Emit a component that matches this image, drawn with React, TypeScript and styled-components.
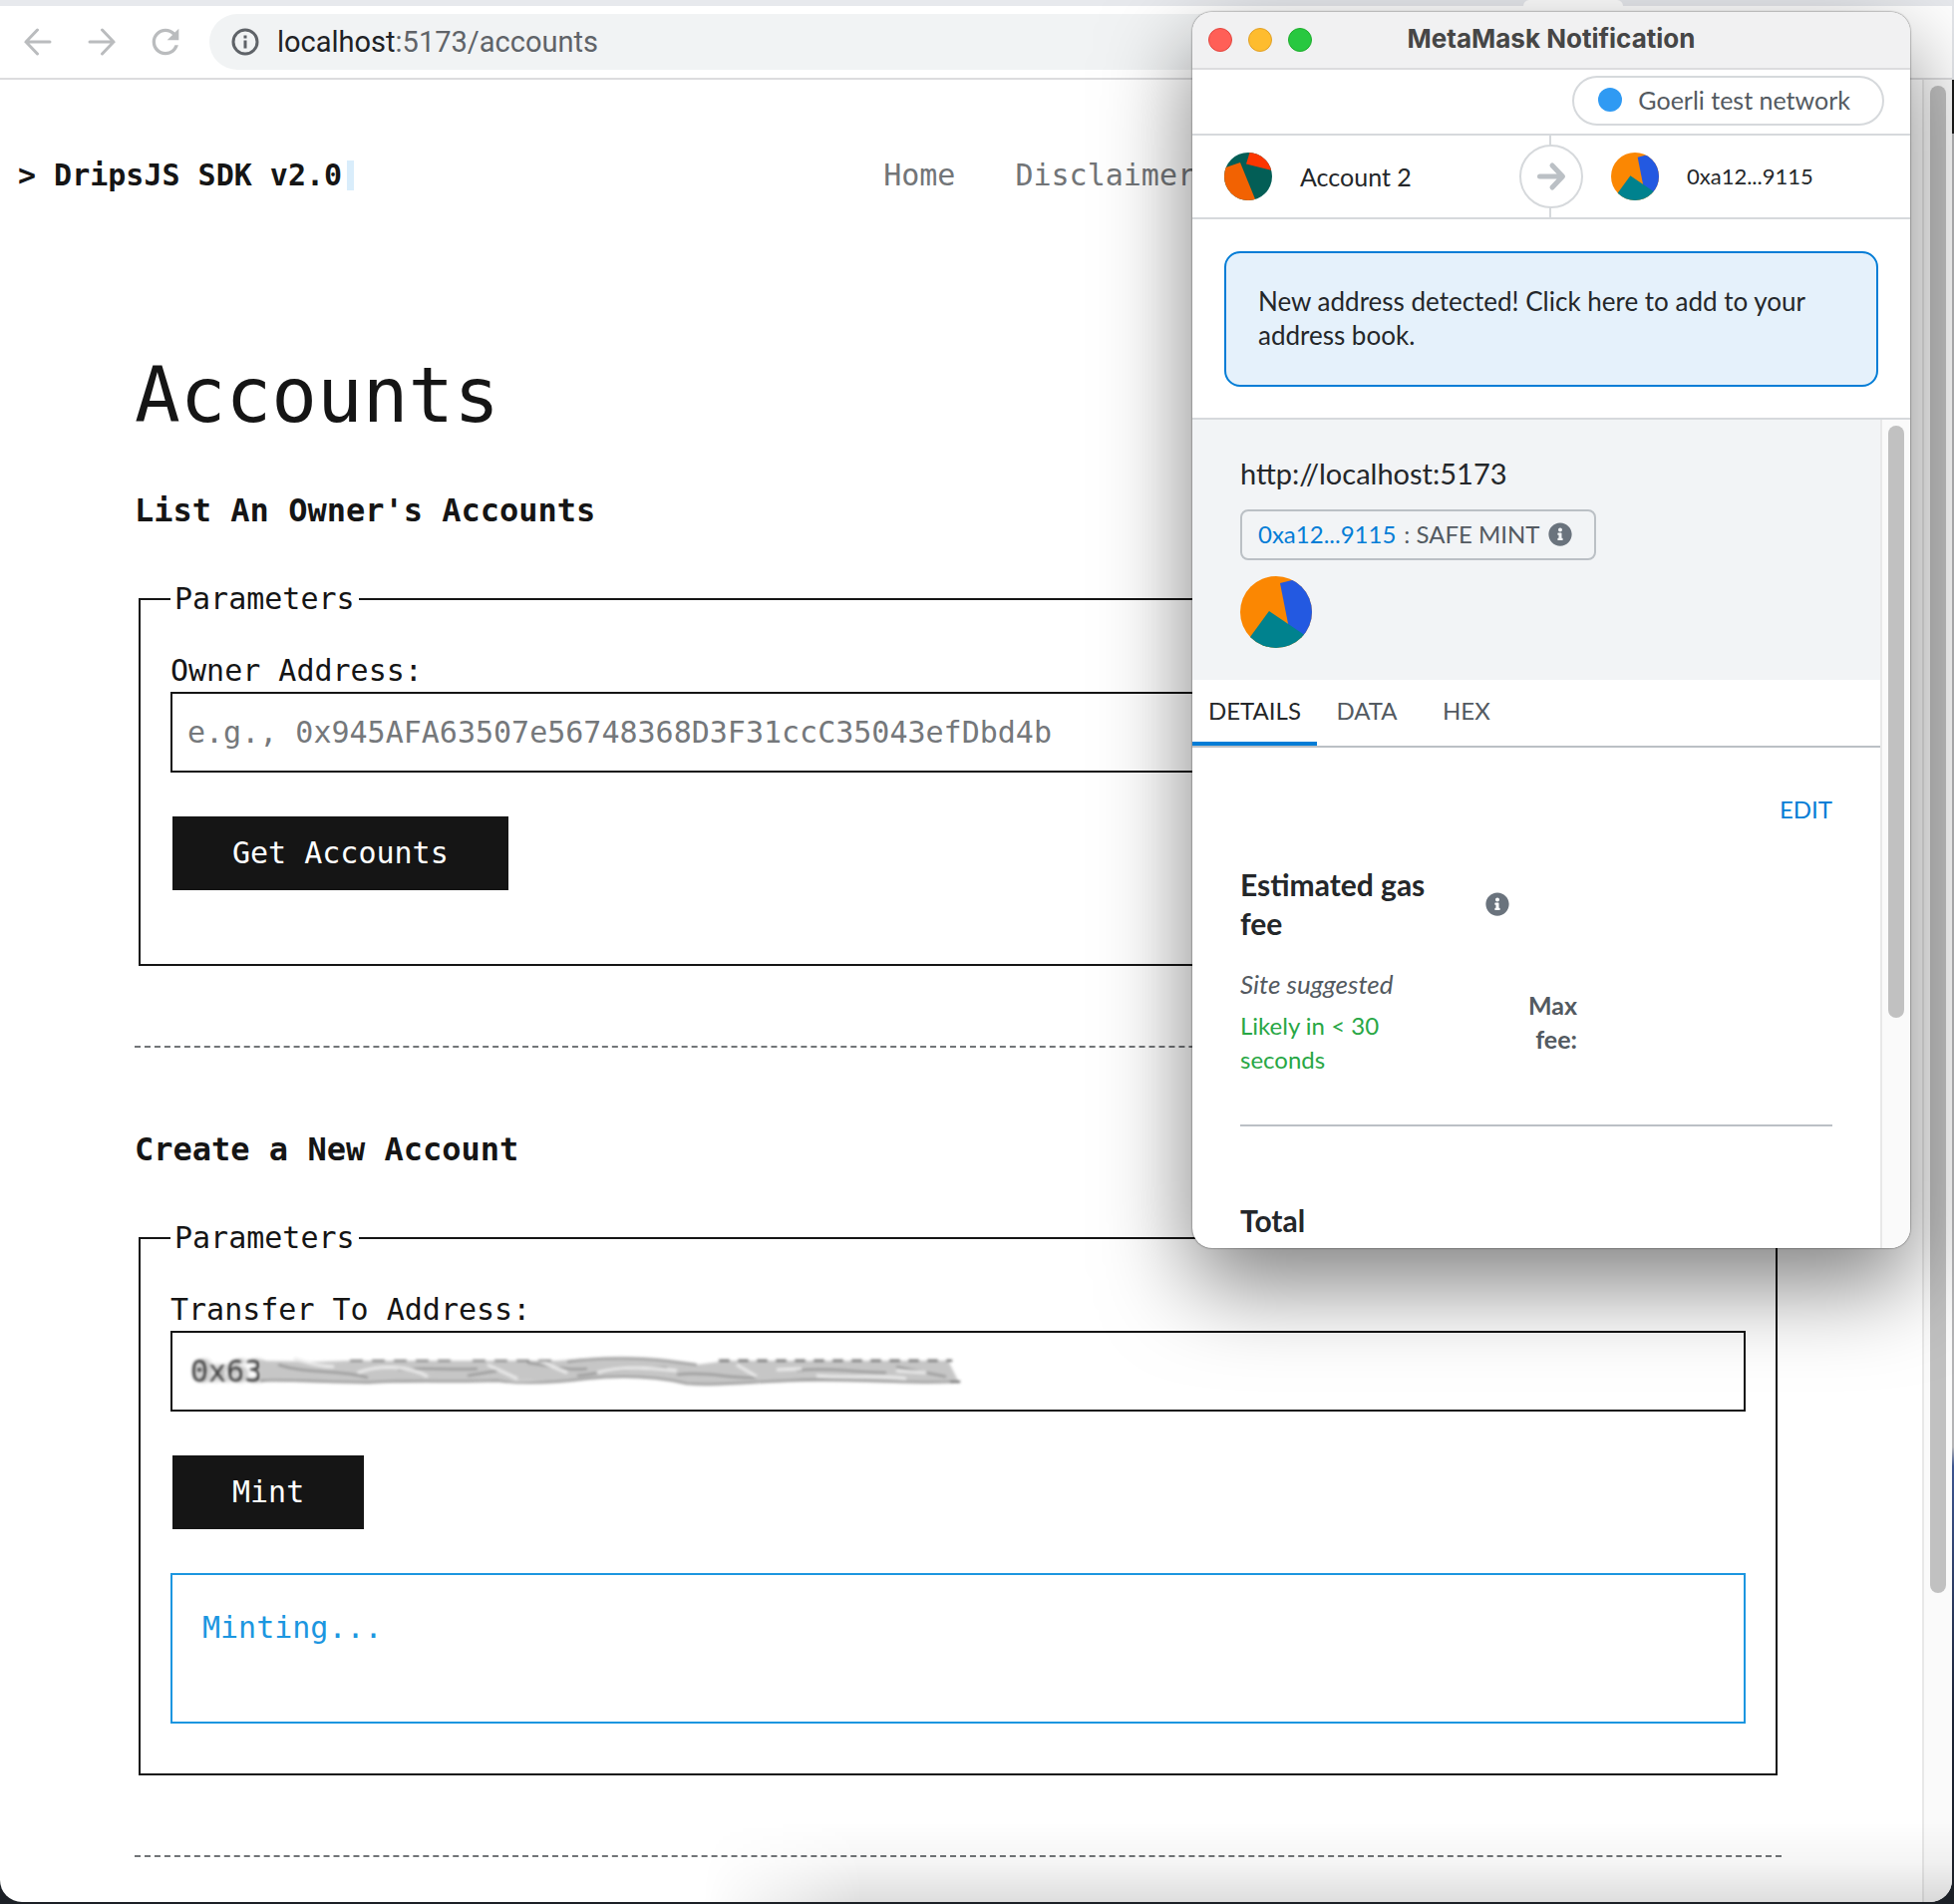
import React, { useState } from "react";
import styled, { createGlobalStyle } from "styled-components";
import { MdRefresh } from "react-icons/md";
import { FaInfoCircle } from "react-icons/fa";

const MONO = `"DejaVu Sans Mono", Menlo, monospace`;
const SANS = `Lato, "Open Sans", sans-serif`;
const INK = "#151515";
const BLUE = "#037dd6";
const LINE = "#d6d9dc";

const GlobalStyle = createGlobalStyle`
  *, *::before, *::after { box-sizing: border-box; }
  body { margin: 0; background: #1c2026; }
  button, input { font: inherit; }
`;

/* ---------- desktop and browser window ---------- */

const Desktop = styled.div`
  position: relative;
  min-height: 100vh;
  display: flex;
  padding: 0 2px 2px 0;
  overflow: hidden;
  background: linear-gradient(#e4e6ea 0 80px, #1a1a1a 80px 134px, #b4b4b6 134px 76%, #3d5590 77%, #1c2334 90%, #1c2026);
`;

const BrowserWindow = styled.div`
  position: relative;
  flex: 1;
  min-width: 0;
  display: flex;
  flex-direction: column;
  overflow: hidden;
  border-radius: 0 0 22px 22px;
  background: #fff;
`;

const TabStrip = styled.div`
  display: flex;
  justify-content: flex-end;
  height: 6px;
  padding-right: 330px;
  background: #e7e9ed;
`;

const ActiveTab = styled.div`
  width: 100px;
  border-radius: 6px 6px 0 0;
  background: #fff;
`;

const Toolbar = styled.div`
  display: flex;
  align-items: center;
  height: 74px;
  padding: 0 60px 0 12px;
  border-bottom: 2px solid #dcdcde;
`;

const NavButton = styled.button`
  display: grid;
  place-items: center;
  width: 52px;
  height: 52px;
  margin-right: 12px;
  padding: 0;
  border: 0;
  background: none;
  color: #babcbe;
`;

const AddressBar = styled.div`
  flex: 1;
  display: flex;
  align-items: center;
  gap: 18px;
  height: 56px;
  margin-left: 6px;
  padding: 0 22px;
  border-radius: 28px;
  background: #f1f3f4;
  color: #5f6368;
  font: 29px/40px Roboto, sans-serif;
`;

const Host = styled.span`
  color: #202124;
`;

const Viewport = styled.div`
  flex: 1;
  display: flex;
`;

const Page = styled.div`
  flex: 1;
  min-width: 0;
  color: ${INK};
  font: 30px/42px ${MONO};
`;

const Track = styled.div`
  flex: none;
  width: 30px;
  padding: 6px 6px 0;
  border-left: 2px solid #e8e8e8;
  background: #fafafa;
`;

const Thumb = styled.div<{ $size: string }>`
  width: 16px;
  height: ${(p) => p.$size};
  border-radius: 8px;
  background: #c1c1c1;
`;

const DockShade = styled.div`
  position: absolute;
  left: 36%;
  right: 0;
  bottom: 0;
  height: 80px;
  pointer-events: none;
  background: linear-gradient(transparent, rgba(0, 0, 0, 0.04) 50%, rgba(0, 0, 0, 0.13));
  mask-image: linear-gradient(to right, transparent, #000 160px);
`;

/* ---------- page content ---------- */

const Header = styled.header`
  display: grid;
  grid-template-columns: minmax(0, 5fr) minmax(0, 6fr);
  padding: 75px 0 0 18px;
`;

const Brand = styled.a`
  display: flex;
  align-items: center;
  gap: 5px;
  color: inherit;
  font-weight: 700;
  text-decoration: none;
`;

const Cursor = styled.span`
  width: 7px;
  height: 30px;
  background: #d9edfb;
`;

const Nav = styled.nav`
  display: flex;
  gap: 60px;

  a {
    color: #727578;
    text-decoration: none;
  }
`;

const Main = styled.main`
  padding: 155px 141px 45px 135px;
`;

const Title = styled.h1`
  margin: 0 0 48px;
  font-size: 76px;
  line-height: 90px;
  font-weight: 400;
`;

const Heading = styled.h2`
  margin: 0 0 46px;
  font-size: 32px;
  line-height: 44px;
  font-weight: 700;
`;

const Parameters = styled.fieldset`
  min-width: 0;
  margin: 0 4px;
  padding: 30px;
  border: 2px solid ${INK};

  legend {
    padding: 0 4px;
  }
`;

const FieldLabel = styled.label`
  display: block;
`;

const FieldBox = styled.div`
  position: relative;
`;

const TextField = styled.input<{ $smudged?: boolean }>`
  display: block;
  width: 100%;
  height: 81px;
  padding: 0 15px;
  border: 2px solid ${INK};
  border-radius: 0;
  outline: 0;
  background: #fff;
  color: ${(p) => (p.$smudged ? "transparent" : INK)};
  text-shadow: ${(p) => (p.$smudged ? "3px 0 3px #333, 8px 0 4px #aaa" : "none")};

  &::placeholder {
    color: #75787b;
    opacity: 1;
  }
`;

const Smudge = styled.svg`
  position: absolute;
  left: 88px;
  top: 22px;
  pointer-events: none;
`;

const Submit = styled.button`
  display: block;
  height: 74px;
  margin: 44px 2px;
  padding: 0 60px;
  border: 0;
  background: ${INK};
  color: #fff;
`;

const Output = styled.output`
  display: block;
  min-height: 151px;
  margin-bottom: 20px;
  padding: 32px 30px;
  border: 2px solid #1c96e0;
  color: #1c96e0;
`;

const Divider = styled.hr`
  margin: 80px 0;
  border: 0;
  border-top: 2px dashed #727578;

  &:last-child {
    margin-bottom: 0;
  }
`;

/* ---------- wallet popup ---------- */

const Popup = styled.section`
  position: absolute;
  top: 12px;
  right: 44px;
  width: 720px;
  height: 1240px;
  display: flex;
  flex-direction: column;
  overflow: hidden;
  border-radius: 20px;
  background: #fff;
  color: #24272a;
  font: 25px/34px ${SANS};
  box-shadow: 0 0 2px rgba(0, 0, 0, 0.7), 0 36px 90px rgba(0, 0, 0, 0.5);
`;

const TitleBar = styled.header`
  position: relative;
  flex: none;
  display: flex;
  align-items: center;
  justify-content: center;
  height: 58px;
  padding-bottom: 2px;
  border-bottom: 2px solid #dcdcde;
  background: #f1f1f2;
`;

const Lights = styled.div`
  position: absolute;
  left: 16px;
  top: 16px;
  display: flex;
  gap: 16px;
`;

const Light = styled.button<{ $fill: string; $edge: string }>`
  width: 24px;
  height: 24px;
  padding: 0;
  border: 1px solid ${(p) => p.$edge};
  border-radius: 50%;
  background: ${(p) => p.$fill};
`;

const WindowTitle = styled.h2`
  margin: 0;
  color: #464646;
  font: 700 26px/34px Inter, sans-serif;
`;

const NetworkRow = styled.div`
  flex: none;
  display: flex;
  align-items: center;
  justify-content: flex-end;
  height: 66px;
  padding: 0 26px 2px 0;
  border-bottom: 2px solid ${LINE};
`;

const Network = styled.button`
  display: flex;
  align-items: center;
  gap: 16px;
  height: 50px;
  padding: 0 32px 2px 24px;
  border: 2px solid ${LINE};
  border-radius: 25px;
  background: #fff;
  color: #535a61;
`;

const Dot = styled.span`
  width: 24px;
  height: 24px;
  border-radius: 50%;
  background: #2f9af3;
`;

const Parties = styled.div`
  position: relative;
  flex: none;
  display: grid;
  grid-template-columns: 1fr 1fr;
  height: 84px;
  border-bottom: 2px solid ${LINE};
`;

const Party = styled.div<{ $inset: number }>`
  display: flex;
  align-items: center;
  gap: 28px;
  padding-left: ${(p) => p.$inset}px;

  &:first-child {
    border-right: 2px solid ${LINE};
  }
`;

const ShortAddress = styled.span`
  font-size: 22px;
`;

const ArrowBadge = styled.div`
  position: absolute;
  left: 50%;
  top: 50%;
  display: grid;
  place-items: center;
  width: 64px;
  height: 64px;
  margin: -32px;
  border: 2px solid ${LINE};
  border-radius: 50%;
  background: #fff;
`;

const NoticeArea = styled.div`
  flex: none;
  padding: 32px 32px 31px;
  border-bottom: 2px solid ${LINE};
`;

const Notice = styled.button`
  display: block;
  width: 100%;
  padding: 31px 32px 33px;
  border: 2px solid ${BLUE};
  border-radius: 16px;
  background: #e5f1fb;
  color: inherit;
  font-size: 26px;
  text-align: left;
`;

const ScrollArea = styled.div`
  flex: 1;
  min-height: 0;
  display: flex;
`;

const ScrollBody = styled.div`
  flex: 1;
  min-width: 0;
  overflow: hidden;
`;

const Summary = styled.div`
  display: flex;
  flex-direction: column;
  align-items: flex-start;
  gap: 16px;
  padding: 34px 48px 32px;
  background: #f2f4f6;
`;

const Origin = styled.div`
  font-size: 29px;
  line-height: 40px;
`;

const Method = styled.div`
  display: flex;
  align-items: center;
  gap: 8px;
  height: 51px;
  padding: 0 22px 2px 16px;
  border: 2px solid #bbc0c5;
  border-radius: 8px;
  color: #535a61;
  font-size: 24px;
`;

const ContractLink = styled.a`
  color: ${BLUE};
  text-decoration: none;
`;

const Info = styled(FaInfoCircle)`
  flex: none;
  width: 24px;
  height: 24px;
  color: #6a737d;
`;

const Tabs = styled.div`
  display: flex;
  height: 68px;
  border-bottom: 2px solid #bbc0c5;
`;

const Tab = styled.button<{ $active?: boolean }>`
  min-width: 100px;
  padding: 0 16px;
  border: 0;
  border-bottom: 4px solid ${(p) => (p.$active ? BLUE : "transparent")};
  background: none;
  color: ${(p) => (p.$active ? "#24272a" : "#535a61")};
  font-size: 24px;
`;

const Details = styled.div`
  padding: 45px 48px 0;
`;

const Edit = styled.button`
  display: block;
  margin: 0 0 39px auto;
  padding: 0;
  border: 0;
  background: none;
  color: ${BLUE};
  font-size: 24px;
`;

const FeeRow = styled.div`
  display: grid;
  grid-template-columns: 200px 138px;
  align-items: center;
  margin-bottom: 24px;
`;

const Strong = styled.div`
  font-size: 30px;
  line-height: 39px;
  font-weight: 700;
`;

const InfoCell = styled.div`
  display: flex;
  padding-left: 46px;
`;

const Suggested = styled.div`
  margin-bottom: 8px;
  color: #535a61;
  font-size: 26px;
  font-style: italic;
`;

const Likely = styled.div`
  color: #28a745;
  font-size: 24px;
`;

const MaxFee = styled.div`
  justify-self: end;
  width: 60px;
  color: #535a61;
  font-weight: 700;
  text-align: right;
`;

const Rule = styled.hr`
  margin: 48px 0 75px;
  border: 0;
  border-top: 2px solid #bbc0c5;
`;

const Chevron = ({ flip }: { flip?: boolean }) => (
  <svg width="28" height="28" viewBox="0 0 28 28" fill="none" stroke="currentColor" strokeWidth="3" strokeLinecap="round">
    {flip ? <path d="M2 14H26M14.500 2L26 14L14.500 26" /> : <path d="M26 14H2M13.500 2L2 14L13.500 26" />}
  </svg>
);

const SiteInfo = () => (
  <svg width="28" height="28" viewBox="0 0 28 28" fill="none" stroke="#5f6368" strokeWidth="3">
    <circle cx="14" cy="14" r="12" />
    <path d="M14 12.500V20.500M14 7.500V10.500" />
  </svg>
);

const SenderIcon = () => (
  <svg width="48" height="48" viewBox="0 0 48 48">
    <clipPath id="sender"><circle cx="24" cy="24" r="24" /></clipPath>
    <g clipPath="url(#sender)">
      <rect width="48" height="48" fill="#035e56" />
      <path d="M0 15.500L16 10L31.500 48H0Z" fill="#f26202" />
      <path d="M25.500 0L22 11.500L48 18V0Z" fill="#fc3600" />
    </g>
  </svg>
);

const ContractIcon = ({ size, id }: { size: number; id: string }) => (
  <svg width={size} height={size} viewBox="0 0 72 72">
    <clipPath id={id}><circle cx="36" cy="36" r="36" /></clipPath>
    <g clipPath={`url(#${id})`}>
      <rect width="72" height="72" fill="#fb8702" />
      <path d="M40 7L56 3L72 8V66L48.500 50Z" fill="#2359e1" />
      <path d="M29 35L66 60V72H2Z" fill="#00828e" />
    </g>
  </svg>
);

const AddressSmudge = () => (
  <Smudge width="708" height="40" viewBox="0 0 708 40" aria-hidden="true">
    <defs>
      <filter id="soft" x="-5%" y="-30%" width="110%" height="160%">
        <feGaussianBlur stdDeviation="1.500" />
      </filter>
    </defs>
    <g filter="url(#soft)" fill="none">
      <path
        d="M2 8L60 9L90 8H300C340 5 380 4 410 8L440 12L470 8H692L702 28C620 32 560 26 480 31C440 34 420 28 400 26C340 22 320 28 290 29C200 25 170 32 110 29C70 31 30 29 2 27Z"
        fill="#c6c6c6"
      />
      <g stroke="#8c8c8c" strokeWidth="2">
        <path d="M2 28C40 27 70 30 110 30C160 27 190 30 240 28C270 32 300 30 330 26C370 22 400 24 430 31C470 34 500 28 560 27C610 26 640 32 700 29" />
        <path d="M20 12C50 22 80 16 110 25M140 17C170 14 190 18 220 16M210 23L240 18M270 10C300 14 310 18 330 16M320 23C350 20 370 14 410 15M420 22C450 18 470 26 500 25M540 18C570 14 600 20 630 20M640 14L690 24" />
        <path d="M310 9C340 5 380 4 410 8L440 12" />
      </g>
      <g stroke="#ececec" strokeWidth="3">
        <path d="M36 6C50 10 60 14 76 14M100 20C120 12 150 12 170 24M230 12L260 26M282 8L310 20M340 20C370 12 400 16 420 18M480 12L500 24M520 17L545 16M560 23C590 26 620 22 650 26M640 18L670 20" />
      </g>
      <g stroke="#3c3c3c" strokeWidth="2">
        <path d="M92 8H200M215 8H300" strokeDasharray="13 9" stroke="#777" />
        <path d="M462 8H696" strokeDasharray="11 8" />
        <path d="M694 29H704" />
      </g>
    </g>
  </Smudge>
);

const TABS = ["DETAILS", "DATA", "HEX"];

export default function App() {
  const [owner, setOwner] = useState("");
  const [recipient, setRecipient] = useState("0x63");
  const [tab, setTab] = useState(TABS[0]);

  return (
    <Desktop>
      <GlobalStyle />
      <BrowserWindow>
        <TabStrip><ActiveTab /></TabStrip>
        <Toolbar>
          <NavButton aria-label="Back"><Chevron /></NavButton>
          <NavButton aria-label="Forward"><Chevron flip /></NavButton>
          <NavButton aria-label="Reload"><MdRefresh size={40} /></NavButton>
          <AddressBar>
            <SiteInfo />
            <span><Host>localhost</Host>:5173/accounts</span>
          </AddressBar>
        </Toolbar>
        <Viewport>
          <Page>
            <Header>
              <Brand href="#home">&gt; DripsJS SDK v2.0<Cursor /></Brand>
              <Nav>
                <a href="#home">Home</a>
                <a href="#disclaimer">Disclaimer</a>
              </Nav>
            </Header>
            <Main>
              <Title>Accounts</Title>
              <Heading>List An Owner's Accounts</Heading>
              <Parameters>
                <legend>Parameters</legend>
                <FieldLabel htmlFor="owner">Owner Address:</FieldLabel>
                <TextField
                  id="owner"
                  value={owner}
                  onChange={(e) => setOwner(e.target.value)}
                  placeholder="e.g., 0x945AFA63507e56748368D3F31ccC35043efDbd4b"
                />
                <Submit type="button">Get Accounts</Submit>
              </Parameters>
              <Divider />
              <Heading>Create a New Account</Heading>
              <Parameters>
                <legend>Parameters</legend>
                <FieldLabel htmlFor="recipient">Transfer To Address:</FieldLabel>
                <FieldBox>
                  <TextField id="recipient" $smudged value={recipient} onChange={(e) => setRecipient(e.target.value)} />
                  <AddressSmudge />
                </FieldBox>
                <Submit type="button">Mint</Submit>
                <Output>Minting...</Output>
              </Parameters>
              <Divider />
            </Main>
          </Page>
          <Track><Thumb $size="83%" /></Track>
        </Viewport>
        <DockShade />
      </BrowserWindow>

      <Popup aria-label="MetaMask Notification">
        <TitleBar>
          <Lights>
            <Light aria-label="Close" $fill="#ff5f57" $edge="#e2463f" />
            <Light aria-label="Minimize" $fill="#febc2e" $edge="#e0a028" />
            <Light aria-label="Zoom" $fill="#28c840" $edge="#1dad2b" />
          </Lights>
          <WindowTitle>MetaMask Notification</WindowTitle>
        </TitleBar>
        <NetworkRow>
          <Network><Dot />Goerli test network</Network>
        </NetworkRow>
        <Parties>
          <Party $inset={32}><SenderIcon />Account 2</Party>
          <Party $inset={60}>
            <ContractIcon size={48} id="recipient-icon" />
            <ShortAddress>0xa12...9115</ShortAddress>
          </Party>
          <ArrowBadge>
            <svg width="30" height="30" viewBox="0 0 30 30" fill="none" stroke="#bbc0c5" strokeWidth="5" strokeLinecap="round" strokeLinejoin="round">
              <path d="M3.500 15H26M16 4L26.500 15L16 26" />
            </svg>
          </ArrowBadge>
        </Parties>
        <NoticeArea>
          <Notice>New address detected! Click here to add to your address book.</Notice>
        </NoticeArea>
        <ScrollArea>
          <ScrollBody>
            <Summary>
              <Origin>http://localhost:5173</Origin>
              <Method>
                <ContractLink href="#contract">0xa12...9115</ContractLink>
                <span>: SAFE MINT</span>
                <Info />
              </Method>
              <ContractIcon size={72} id="contract-icon" />
            </Summary>
            <Tabs role="tablist">
              {TABS.map((name) => (
                <Tab key={name} role="tab" aria-selected={tab === name} $active={tab === name} onClick={() => setTab(name)}>
                  {name}
                </Tab>
              ))}
            </Tabs>
            <Details>
              <Edit>EDIT</Edit>
              <FeeRow>
                <Strong>Estimated gas fee</Strong>
                <InfoCell><Info /></InfoCell>
              </FeeRow>
              <FeeRow>
                <div>
                  <Suggested>Site suggested</Suggested>
                  <Likely>Likely in &lt; 30 seconds</Likely>
                </div>
                <MaxFee>Max fee:</MaxFee>
              </FeeRow>
              <Rule />
              <Strong>Total</Strong>
            </Details>
          </ScrollBody>
          <Track><Thumb $size="72%" /></Track>
        </ScrollArea>
      </Popup>
    </Desktop>
  );
}
